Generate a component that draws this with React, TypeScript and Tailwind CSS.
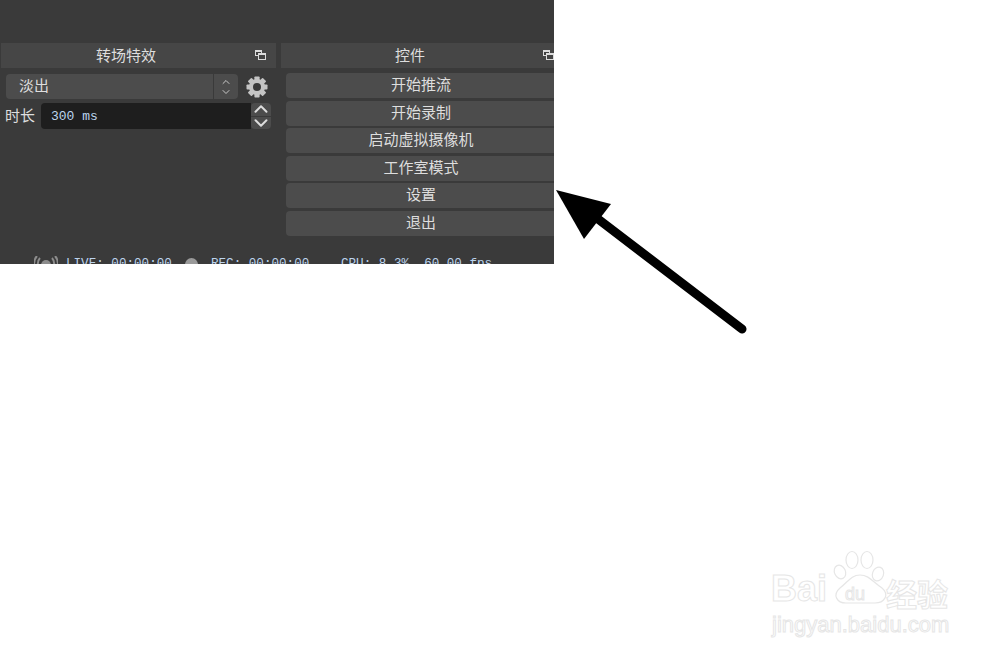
import { ChevronDown, ChevronUp } from "lucide-react";

const cjk = "font-['Noto_Sans_CJK_SC','Noto_Sans',sans-serif]";
const mono = "font-['Liberation_Mono','Noto_Sans_CJK_SC',monospace]";
const outline = "[-webkit-text-stroke:1px_#e6e6e6]";

const controls = ["开始推流", "开始录制", "启动虚拟摄像机", "工作室模式", "设置", "退出"];

function FloatIcon({ className }: { className: string }) {
  return (
    <svg viewBox="0 0 11 10" className={className} fill="none" stroke="#dcdcdc" strokeWidth="1">
      <rect x="0.5" y="0.5" width="6" height="5" fill="#3f3f3f" />
      <path d="M0.5 1.5h6" />
      <rect x="3.5" y="3.5" width="7" height="6" fill="#444" />
      <path d="M3.5 4.5h7" />
    </svg>
  );
}

function DockHeader({ title, className, iconClass }: { title: string; className: string; iconClass: string }) {
  return (
    <div className={`relative flex h-[25px] items-center justify-center bg-[#464646] pb-px text-[15px] text-[#dedede] ${className}`}>
      {title}
      <FloatIcon className={`absolute top-[7px] h-[10px] w-[11px] ${iconClass}`} />
    </div>
  );
}

function Gear() {
  const teeth = [0, 45, 90, 135];
  return (
    <svg viewBox="0 0 22 22" className="h-[22px] w-[22px]">
      <g fill="#c4c4c4">
        {teeth.map((a) => (
          <rect key={a} x="8.4" y="0.5" width="5.2" height="21" rx="0.8" transform={`rotate(${a} 11 11)`} />
        ))}
      </g>
      <circle cx="11" cy="11" r="8" fill="#c4c4c4" />
      <circle cx="11" cy="11" r="4" fill="#3a3a3a" />
    </svg>
  );
}

function Arrow() {
  return (
    <svg viewBox="0 0 200 150" className="absolute left-[550px] top-[185px] h-[150px] w-[200px]">
      <path d="M192 144L48 34" stroke="#000" strokeWidth="9" strokeLinecap="round" />
      <path d="M6 5L61 19L34 54Z" fill="#000" />
    </svg>
  );
}

function Watermark() {
  return (
    <div className="absolute left-[770px] top-[550px] h-[90px] w-[185px] text-white">
      <svg viewBox="0 0 60 55" className="absolute left-[62px] top-0 h-[55px] w-[60px]" fill="#fff" stroke="#e6e6e6" strokeWidth="1.2">
        <ellipse cx="8" cy="22" rx="5.5" ry="7" transform="rotate(-25 8 22)" />
        <ellipse cx="20" cy="10" rx="6" ry="8.5" />
        <ellipse cx="35" cy="10" rx="6" ry="8.5" />
        <ellipse cx="46" cy="24" rx="5.5" ry="7" transform="rotate(20 46 24)" />
        <path d="M28 25C37 25 41 32 50 38C58 45 52 53 43 53C35 53 22 53 14 53C5 53 0 45 8 38C16 32 19 25 28 25Z" />
      </svg>
      <div className={`absolute left-[1px] top-[21px] font-['Liberation_Sans',sans-serif] text-[36px] font-bold leading-none ${outline}`}>
        Bai
      </div>
      <div className={`absolute left-[75px] top-[35px] font-['Liberation_Sans',sans-serif] text-[18px] leading-none ${outline}`}>
        du
      </div>
      <div className={`absolute left-[116px] top-[27px] text-[31px] font-bold leading-none ${outline}`}>
        经验
      </div>
      <div className={`absolute left-[2px] top-[64px] font-['Liberation_Sans',sans-serif] text-[22px] leading-none ${outline}`}>
        jingyan.baidu.com
      </div>
    </div>
  );
}

export default function App() {
  return (
    <div className={`relative h-[658px] w-[1004px] overflow-hidden bg-white ${cjk}`}>
      <div className="h-[264px] w-[554px] overflow-hidden bg-[#3a3a3a] pt-[43px]">
        <div className="flex gap-[5px] pl-px">
          {/* transitions dock */}
          <div className="w-[275px] shrink-0">
            <DockHeader title="转场特效" className="w-full pr-[25px]" iconClass="right-[10px]" />
            <div className="mt-[6px] flex items-center pl-[5px]">
              <div className="flex h-[25px] w-[232px] rounded-[4px] bg-[#4c4c4c] text-[15px] text-[#dedede]">
                <div className="flex flex-1 items-center pb-[2px] pl-[13px]">淡出</div>
                <div className="flex w-[25px] flex-col items-center justify-center border-l border-[#3a3a3a]">
                  <ChevronUp size={12} color="#c8c8c8" className="-my-px" />
                  <ChevronDown size={12} color="#c8c8c8" className="-my-px" />
                </div>
              </div>
              <div className="ml-[8px]">
                <Gear />
              </div>
            </div>
            <div className="mt-[4px] flex h-[26px] items-center pl-[4px]">
              <span className="w-[36px] pb-[2px] text-[15px] text-[#dedede]">时长</span>
              <div className={`flex h-[26px] w-[210px] items-center rounded-l-[4px] bg-[#1e1e1e] pl-[10px] pt-[2px] text-[13px] text-[#bcd4ee] ${mono}`}>
                300 ms
              </div>
              <div className="flex h-[26px] w-[20px] flex-col gap-px">
                <div className="flex h-[12.5px] items-center justify-center overflow-hidden rounded-t-[4px] bg-[#4c4c4c]">
                  <ChevronUp size={22} strokeWidth={2.2} color="#dcdcdc" className="shrink-0" />
                </div>
                <div className="flex h-[12.5px] items-center justify-center overflow-hidden rounded-b-[4px] bg-[#4c4c4c]">
                  <ChevronDown size={22} strokeWidth={2.2} color="#dcdcdc" className="shrink-0" />
                </div>
              </div>
            </div>
          </div>
          {/* controls dock */}
          <div className="flex-1">
            <DockHeader title="控件" className="w-full pr-[17px]" iconClass="right-[2px]" />
            <div className="mt-[5px] flex flex-col gap-[2.5px] pl-[5px]">
              {controls.map((label) => (
                <div
                  key={label}
                  className="flex h-[25px] w-[270px] shrink-0 items-center justify-center rounded-l-[4px] bg-[#4c4c4c] pb-[2px] text-[15px] text-[#dedede]"
                >
                  {label}
                </div>
              ))}
            </div>
          </div>
        </div>
        {/* status bar */}
        <div className={`mt-[20px] flex items-center text-[12.6px] leading-none text-[#bcd4ee] ${mono}`}>
          <svg viewBox="0 0 24 18" className="ml-[34px] h-[18px] w-[24px]" fill="none" stroke="#8c8c8c" strokeWidth="2">
            <circle cx="12" cy="9" r="5" fill="#8c8c8c" stroke="none" />
            <path d="M6 2C3 5 3 13 6 16M18 2C21 5 21 13 18 16M3 0C-1 4-1 14 3 18M21 0C25 4 25 14 21 18" />
          </svg>
          <span className="ml-[8px] w-[119px]">LIVE: 00:00:00</span>
          <span className="h-[13px] w-[13px] rounded-full bg-[#9a9a9a]" />
          <span className="ml-[13px] w-[130px]">REC: 00:00:00</span>
          <span>CPU: 8.3%, 60.00 fps</span>
        </div>
      </div>
      <Arrow />
      <Watermark />
    </div>
  );
}
